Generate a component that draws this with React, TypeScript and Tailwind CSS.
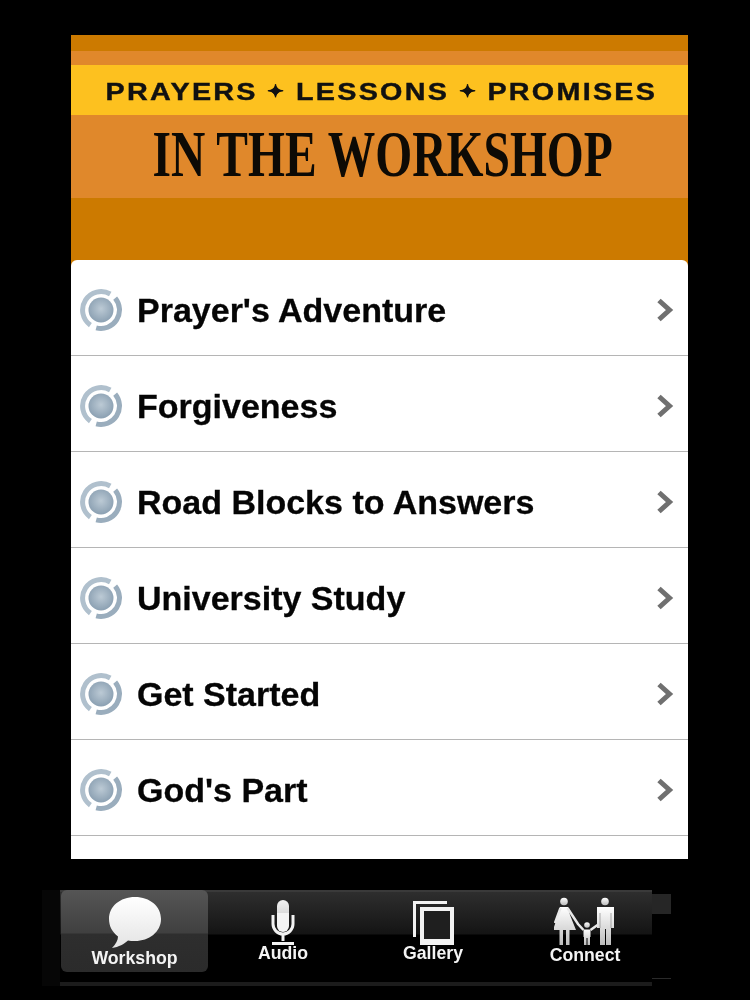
const sans = "font-['Liberation_Sans',Arial,sans-serif]"

const items = ["Prayer's Adventure", 'Forgiveness', 'Road Blocks to Answers', 'University Study', 'Get Started', "God's Part"]

function RingIcon() {
  return (
    <svg width="44" height="44" viewBox="0 0 44 44" className="shrink-0">
      <defs>
        <radialGradient id="disc" cx="50%" cy="45%" r="55%">
          <stop offset="0%" stopColor="#bccad5" />
          <stop offset="100%" stopColor="#8ba0b2" />
        </radialGradient>
      </defs>
      <path d="M31.250 5.980 A18.500 18.500 0 0 0 11.400 37.150" fill="none" stroke="#b0c0cd" strokeWidth="5" />
      <path d="M17.200 39.870 A18.500 18.500 0 0 0 36.170 10.110" fill="none" stroke="#9aadbd" strokeWidth="5" />
      <circle cx="22" cy="22" r="12.500" fill="url(#disc)" />
    </svg>
  )
}

function Chevron() {
  return (
    <svg width="18" height="26" viewBox="0 0 18 26">
      <path d="M3 3.500 L13.500 13 L3 22.500" fill="none" stroke="#707070" strokeWidth="5" />
    </svg>
  )
}

function Bubble() {
  return (
    <svg width="54" height="52" viewBox="0 0 54 52">
      <defs>
        <linearGradient id="bub" x1="0" y1="0" x2="0" y2="1">
          <stop offset="0%" stopColor="#ffffff" />
          <stop offset="100%" stopColor="#e4e4e4" />
        </linearGradient>
      </defs>
      <path
        d="M27 0 C42 0 53 9.500 53 22 C53 35 41 44 27 44 C24 44 22 44 20 43.500 C16 47 11 50 4 51 C8 47 10 43 10 39.500 C4 35 1 29 1 22 C1 9.500 12 0 27 0 Z"
        fill="url(#bub)"
      />
    </svg>
  )
}

function Mic() {
  return (
    <svg width="24" height="45" viewBox="0 0 24 45">
      <defs>
        <linearGradient id="cap" x1="0" y1="0" x2="0" y2="1">
          <stop offset="0%" stopColor="#f2f2f2" />
          <stop offset="40%" stopColor="#dcdcdc" />
          <stop offset="41%" stopColor="#f4f4f4" />
          <stop offset="100%" stopColor="#f4f4f4" />
        </linearGradient>
      </defs>
      <rect x="6" y="0" width="12" height="32" rx="6" fill="url(#cap)" />
      <path d="M2 15 V24 A10 10 0 0 0 22 24 V15" fill="none" stroke="#f2f2f2" strokeWidth="3" />
      <path d="M12 34 V41" stroke="#f2f2f2" strokeWidth="3" />
      <path d="M1 43.500 H23" stroke="#f2f2f2" strokeWidth="3" />
    </svg>
  )
}

function Frames() {
  return (
    <svg width="41" height="44" viewBox="0 0 41 44">
      <path d="M1.500 36 V1.500 H34" fill="none" stroke="#f2f2f2" strokeWidth="3" />
      <rect x="7" y="6" width="34" height="38" fill="#f2f2f2" />
      <rect x="11" y="10" width="26" height="28" fill="#1f1f1f" />
    </svg>
  )
}

function Family() {
  return (
    <svg width="62" height="50" viewBox="0 0 62 50">
      <defs>
        <linearGradient id="fam" x1="0" y1="0" x2="0" y2="1">
          <stop offset="0%" stopColor="#ffffff" />
          <stop offset="100%" stopColor="#bdbdbd" />
        </linearGradient>
      </defs>
      <g fill="url(#fam)">
        <circle cx="10" cy="4.500" r="3.800" />
        <path d="M6 10 H14 L16 18 L22 33 H15.500 V48 H12 V33 H9 V48 H5.500 V33 H-1 L4 18 Z" />
        <circle cx="33" cy="28" r="2.800" />
        <path d="M29.500 32.500 H36.500 V40 H36 V48 H33.500 V41 H32.500 V48 H30 V40 H29.500 Z" />
        <circle cx="51" cy="4.500" r="3.800" />
        <path d="M43 10 H60 V31 H57 V48 H52 V32 H51 V48 H46 V31 H43 Z" />
      </g>
      <path d="M6.500 11 L1 26 M13.500 11 L24 27 L29.500 33 M36.500 33 L43.500 28" fill="none" stroke="#e8e8e8" strokeWidth="2.500" />
      <path d="M46 16 V31 M57 16 V31" stroke="#777" strokeWidth="0.600" />
    </svg>
  )
}

export default function App() {
  return (
    <div className={`h-[1000px] w-[750px] overflow-hidden bg-black pt-[35px] blur-[0.4px] ${sans}`}>
      <main className="ml-[71px] h-[824px] w-[617px] overflow-hidden bg-[#cc7a00]">
        <header className="h-[225px] pt-[16px]">
          <div className="h-[147px] bg-[#e0882b] pt-[14px]">
            <div className="flex h-[50px] items-center justify-center whitespace-nowrap bg-[#fdc11f] pt-[4px] pl-[3px] text-[#111]">
              <span className="inline-flex scale-x-[1.197] items-center text-[24px] font-bold tracking-[1.9px] [-webkit-text-stroke:0.4px_#111]">
                PRAYERS <span className="mx-[8px] text-[17px]">✦</span> LESSONS <span className="mx-[8px] text-[17px]">✦</span> PROMISES
              </span>
            </div>
            <div className="flex h-[83px] items-center justify-center whitespace-nowrap pb-[6px] pl-[6px] font-['Liberation_Serif',serif] text-[66px] leading-none font-bold text-[#0d0a05]">
              <span className="inline-block scale-x-[0.72]">IN THE WORKSHOP</span>
            </div>
          </div>
        </header>
        <ul className="h-[599px] rounded-t-[6px] bg-white">
          {items.map((item) => (
            <li key={item} className="flex h-[96px] items-center border-b border-[#b5b5b5] pt-[5px] pr-[14px] pl-[8px]">
              <RingIcon />
              <span className="ml-[14px] flex-1 text-[34px] font-bold text-[#050505] [-webkit-text-stroke:0.3px_#050505]">{item}</span>
              <Chevron />
            </li>
          ))}
        </ul>
      </main>

      <nav className="mt-[31px] ml-[42px] flex h-[96px] w-[629px]">
        <div className="h-full w-[18px] bg-[#060606]" />
        <div className="h-full w-[592px] bg-[linear-gradient(#3a3a3a_2px,#2e2e2e_2px,#141414_44px,#000_45px,#000_92px,#1c1c1c_92px)]">
          <div className="flex h-full text-[17.7px] font-bold text-[#f4f4f4]">
            <div className="ml-px flex h-[82px] w-[147px] flex-col items-center rounded-[6px] bg-[linear-gradient(#555,#404040_43px,#2e2e2e_44px,#2b2b2b)] pt-[7px]">
              <Bubble />
              <span className="mt-[1px] leading-[17px]">Workshop</span>
            </div>
            <div className="flex w-[154px] flex-col items-center pt-[10px] pr-[4px]">
              <Mic />
              <span className="leading-[17px]">Audio</span>
            </div>
            <div className="flex w-[142px] flex-col items-center pt-[11px]">
              <Frames />
              <span className="leading-[17px]">Gallery</span>
            </div>
            <div className="flex w-[148px] flex-col items-center pt-[7px] pl-[14px]">
              <Family />
              <span className="leading-[17px]">Connect</span>
            </div>
          </div>
        </div>
        <div className="flex h-full w-[19px] flex-col">
          <div className="mt-[4px] h-[20px] bg-[#262626]" />
          <div className="mt-[64px] h-px bg-[#2a2a2a]" />
        </div>
      </nav>
    </div>
  )
}
